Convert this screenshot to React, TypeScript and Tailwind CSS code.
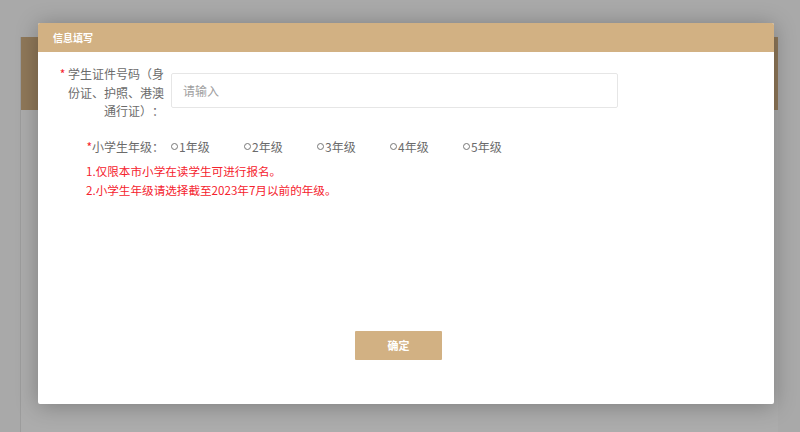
import React from 'react';

const grades = ['1年级', '2年级', '3年级', '4年级', '5年级'];

export default function App() {
  return (
    <div
      className="relative w-[800px] h-[432px] overflow-hidden bg-[#a9a9a9]"
      style={{ fontFamily: '"Noto Sans CJK SC", "Noto Sans", sans-serif' }}
    >
      {/* page behind the mask */}
      <div className="pt-[37px] pl-[20px] pr-[22px] h-full">
        <div className="h-full border-l border-[#9c9c9c] bg-[#acacac]">
          <div className="h-[73px] bg-[#8f7859]" />
        </div>
      </div>

      {/* modal layer */}
      <div className="absolute inset-0 pt-[23px] pl-[38px]">
        <div className="w-[736px] h-[381px] bg-white rounded-[2px] shadow-[0_2px_22px_rgba(0,0,0,0.28)] overflow-hidden flex flex-col">
          <div className="h-[29px] bg-[#d2b183] flex items-center pl-[15px] text-[10px] font-bold text-white">
            信息填写
          </div>

          <div className="pt-[13px] pl-[20px] flex flex-col">
            {/* id number */}
            <div className="flex items-start">
              <div className="w-[106px] text-right text-[12px] leading-[18.5px] text-[#6b6b6b]">
                <span className="text-[#f5222d]">*</span> {'学生证件号码（身份证、护照、港澳通行证）\u2060：'}
              </div>
              <div className="ml-[7px] mt-[8px] w-[447px] h-[35px] border border-[#e6e6e6] rounded-[2px] flex items-center pl-[11px] text-[12px] text-[#a0a0a0]">
                请输入
              </div>
            </div>

            {/* grade */}
            <div className="flex items-center mt-[17px] h-[18px]">
              <div className="w-[106px] text-right text-[12px] text-[#6b6b6b]">
                <span className="text-[#f5222d]">*</span>小学生年级：
              </div>
              <div className="ml-[7px] flex">
                {grades.map((g) => (
                  <div key={g} className="w-[73px] flex items-center text-[12px] text-[#6b6b6b]">
                    <span className="w-[7px] h-[7px] rounded-full border border-[#777] mr-[1px]" />
                    {g}
                  </div>
                ))}
              </div>
            </div>

            {/* notes */}
            <div className="mt-[6px] pl-[28px] text-[11.6px] leading-[19px] text-[#f5222d]">
              <div>1.仅限本市小学在读学生可进行报名。</div>
              <div>2.小学生年级请选择截至2023年7月以前的年级。</div>
            </div>
          </div>

          <div className="mt-[131px] flex pl-[317px]">
            <button className="w-[87px] h-[29px] bg-[#d2b183] text-white text-[11px] font-bold rounded-[1px]">
              确定
            </button>
          </div>
        </div>
      </div>
    </div>
  );
}
